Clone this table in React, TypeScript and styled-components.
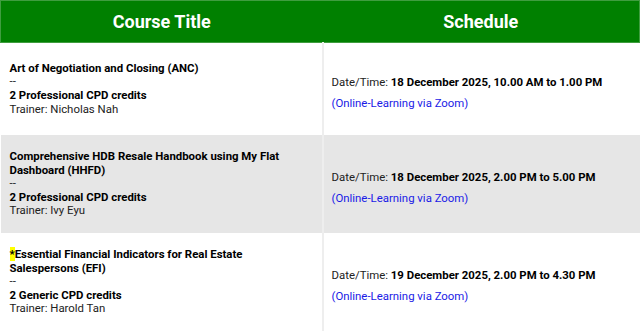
import React from "react";
import styled, { createGlobalStyle } from "styled-components";

const Global = createGlobalStyle`
  html, body { margin: 0; padding: 0; background: #ffffff; }
  body { font-family: Roboto, "Liberation Sans", Arial, sans-serif; }
`;

const Table = styled.table`
  width: 640px;
  border-collapse: collapse;
  border-spacing: 0;
  table-layout: fixed;
  font-family: Roboto, "Liberation Sans", Arial, sans-serif;
`;

const HeadCell = styled.th<{ $first?: boolean }>`
  background: #008000;
  color: #ffffff;
  font-size: 18px;
  font-weight: 700;
  height: 42px;
  box-sizing: border-box;
  padding: 0;
  text-align: center;
  vertical-align: middle;
  border-top: 1px solid #3f9d3f;
  border-bottom: 1px solid #3f9d3f;
  border-left: ${(p) => (p.$first ? "1px solid #3f9d3f" : "none")};
  border-right: ${(p) => (p.$first ? "none" : "1px solid #3f9d3f")};
`;

const Row = styled.tr<{ $shaded?: boolean }>`
  background: ${(p) => (p.$shaded ? "#e6e6e6" : "#ffffff")};
`;

const CourseCell = styled.td`
  padding: 15px 8px 15px 9px;
  vertical-align: middle;
  border-right: 2px solid #eeeeee;
  font-size: 11.4px;
  line-height: 13.6px;
  color: #222222;
`;

const ScheduleCell = styled.td`
  padding: 32px 8px 25px 8px;
  vertical-align: middle;
  font-size: 11.4px;
  line-height: 14px;
  color: #222222;
`;

const Title = styled.div`
  font-weight: 700;
  color: #000000;
`;

const Mark = styled.span`
  background: #ffff00;
`;

const Dash = styled.div`
  color: #222222;
`;

const Credits = styled.div`
  font-weight: 700;
  color: #000000;
`;

const Trainer = styled.div`
  color: #222222;
`;

const DateLine = styled.div`
  color: #222222;
`;

const Strong = styled.strong`
  font-weight: 700;
  color: #000000;
`;

const Mode = styled.div`
  margin-top: 7px;
  color: #1a1ae6;
`;

type Course = {
  marked?: boolean;
  title: string;
  credits: string;
  trainer: string;
  date: string;
};

const courses: Course[] = [
  {
    title: "Art of Negotiation and Closing (ANC)",
    credits: "2 Professional CPD credits",
    trainer: "Trainer: Nicholas Nah",
    date: "18 December 2025, 10.00 AM to 1.00 PM",
  },
  {
    title: "Comprehensive HDB Resale Handbook using My Flat Dashboard (HHFD)",
    credits: "2 Professional CPD credits",
    trainer: "Trainer: Ivy Eyu",
    date: "18 December 2025, 2.00 PM to 5.00 PM",
  },
  {
    marked: true,
    title: "Essential Financial Indicators for Real Estate Salespersons (EFI)",
    credits: "2 Generic CPD credits",
    trainer: "Trainer: Harold Tan",
    date: "19 December 2025, 2.00 PM to 4.30 PM",
  },
];

export default function App() {
  return (
    <>
      <Global />
      <Table>
        <colgroup>
          <col style={{ width: 322 }} />
          <col />
        </colgroup>
        <thead>
          <tr>
            <HeadCell $first>Course Title</HeadCell>
            <HeadCell>Schedule</HeadCell>
          </tr>
        </thead>
        <tbody>
          {courses.map((c, i) => (
            <Row key={i} $shaded={i % 2 === 1}>
              <CourseCell>
                <Title>
                  {c.marked && <Mark>*</Mark>}
                  {c.title}
                </Title>
                <Dash>--</Dash>
                <Credits>{c.credits}</Credits>
                <Trainer>{c.trainer}</Trainer>
              </CourseCell>
              <ScheduleCell>
                <DateLine>
                  Date/Time: <Strong>{c.date}</Strong>
                </DateLine>
                <Mode>(Online-Learning via Zoom)</Mode>
              </ScheduleCell>
            </Row>
          ))}
        </tbody>
      </Table>
    </>
  );
}
